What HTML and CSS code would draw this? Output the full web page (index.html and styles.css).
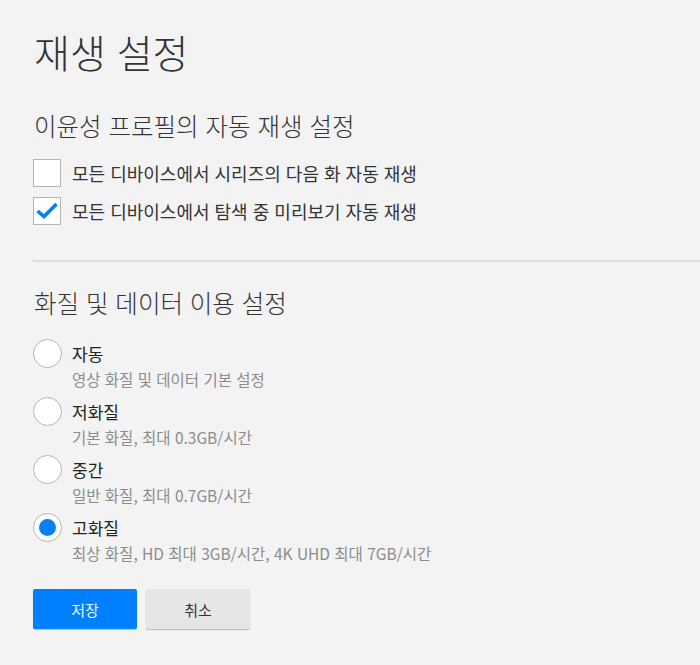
FILE: index.html
```html
<!DOCTYPE html>
<html lang="ko">
<head>
  <meta charset="UTF-8" />
  <title>재생 설정</title>
  <link rel="stylesheet" href="styles.css">
</head>
<body>
  <div class="page">
    <h1>재생 설정</h1>

    <section class="autoplay">
      <h2>이윤성 프로필의 자동 재생 설정</h2>
      <label class="check-row">
        <span class="check-box"></span>
        <span>모든 디바이스에서 시리즈의 다음 화 자동 재생</span>
      </label>
      <label class="check-row">
        <span class="check-box">
          <svg viewBox="0 0 28 28" width="28" height="28">
            <path d="M4.5 14 L11 19.5 L23.5 7" fill="none" stroke="#0080ff" stroke-width="3.6" stroke-linejoin="miter" />
          </svg>
        </span>
        <span>모든 디바이스에서 탐색 중 미리보기 자동 재생</span>
      </label>
    </section>

    <hr class="divider">

    <section class="quality">
      <h2>화질 및 데이터 이용 설정</h2>
      <label class="option">
        <span class="radio"></span>
        <span class="option-name">자동</span>
        <span class="option-desc">영상 화질 및 데이터 기본 설정</span>
      </label>
      <label class="option">
        <span class="radio"></span>
        <span class="option-name">저화질</span>
        <span class="option-desc">기본 화질, 최대 0.3GB/시간</span>
      </label>
      <label class="option">
        <span class="radio"></span>
        <span class="option-name">중간</span>
        <span class="option-desc">일반 화질, 최대 0.7GB/시간</span>
      </label>
      <label class="option">
        <span class="radio checked"></span>
        <span class="option-name">고화질</span>
        <span class="option-desc">최상 화질, HD 최대 3GB/시간, 4K UHD 최대 7GB/시간</span>
      </label>
    </section>

    <div class="actions">
      <button class="btn primary">저장</button>
      <button class="btn secondary">취소</button>
    </div>
  </div>
</body>
</html>
```

FILE: styles.css
```css
* {
  margin: 0;
  padding: 0;
  box-sizing: border-box;
}
body {
  font-family: "Noto Sans CJK KR", "Noto Sans", sans-serif;
  background: #f3f3f3;
  color: #333;
}
.page {
  padding: 28px 0 40px 33px;
}

/* HEADINGS */
h1 {
  font-size: 39px; font-weight: 300;
  line-height: 46px; margin-left: 1px;
  color: #333;
}
h2 {
  font-size: 24.5px; font-weight: 300;
  line-height: 32px; margin-left: 1px;
  color: #333;
}
.autoplay { margin-top: 36px; }
.autoplay h2 { margin-bottom: 17px; }

/* CHECKBOXES */
.check-row {
  display: flex; align-items: center;
  gap: 11px; font-size: 18px;
  line-height: 28px; margin-bottom: 10px;
}
.check-box {
  width: 28px; height: 28px; flex: none;
  background: #fff; border: 1px solid #b5b5b5;
  position: relative;
}
.check-box svg {
  position: absolute; top: -1px; left: -1px;
}

.divider {
  border: none; border-top: 2px solid #dedede;
  margin: 35px 0 25px 0;
}

/* RADIO OPTIONS */
.quality h2 { margin-bottom: 20px; }
.option {
  display: grid;
  grid-template-columns: 29px 1fr;
  column-gap: 10px;
  margin-bottom: 8px;
}
.radio {
  width: 29px; height: 29px;
  border-radius: 50%;
  background: #fff; border: 1px solid #b5b5b5;
  display: flex; align-items: center; justify-content: center;
}
.radio.checked::after {
  content: ''; width: 17px; height: 17px;
  border-radius: 50%; background: #0080ff;
}
.option-name {
  font-size: 17px; line-height: 29px;
  color: #222;
}
.option-desc {
  grid-column: 2;
  font-size: 15.5px; line-height: 20px;
  margin-top: 1px; color: #8c8c8c;
}

/* BUTTONS */
.actions {
  display: flex; gap: 9px;
  margin-top: 26px;
}
.btn {
  width: 104px; height: 40px;
  border: none; border-radius: 2px;
  font-family: inherit; font-size: 15px;
  cursor: pointer;
}
.btn.primary {
  background: #0080ff; color: #eaf4ff;
  box-shadow: 0 1px 1px rgba(0,0,0,0.2);
}
.btn.secondary {
  background: #e6e6e6; color: #333;
  box-shadow: 0 1px 1px rgba(0,0,0,0.25);
}
```
